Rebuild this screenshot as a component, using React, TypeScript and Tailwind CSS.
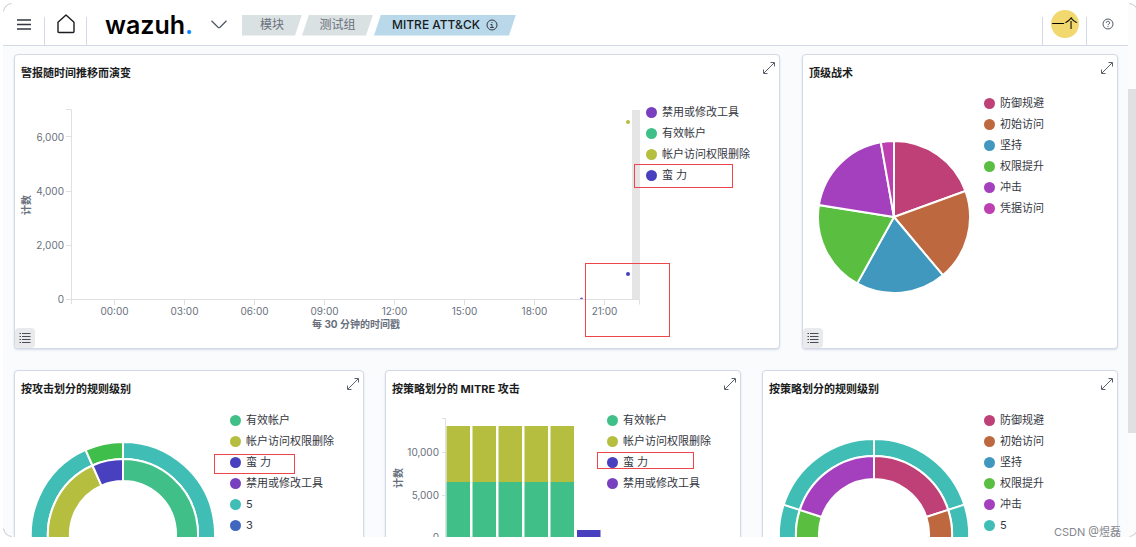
import type { ReactNode } from 'react';

interface LegendEntry {
  label: string;
  color: string;
}

interface Slice {
  from: number;
  to: number;
  color: string;
}

const green = '#40c088';
const olive = '#b6be40';
const indigo = '#4840be';
const purple = '#7840be';
const teal = '#40beb6';
const pink = '#be4076';
const orange = '#be6840';
const sky = '#4098be';
const lime = '#5abe40';
const violet = '#a440be';
const magenta = '#be40b0';

const evolutionLegend: LegendEntry[] = [
  { label: '禁用或修改工具', color: purple },
  { label: '有效帐户', color: green },
  { label: '帐户访问权限删除', color: olive },
  { label: '蛮 力', color: indigo },
];

const tacticsLegend: LegendEntry[] = [
  { label: '防御规避', color: pink },
  { label: '初始访问', color: orange },
  { label: '坚持', color: sky },
  { label: '权限提升', color: lime },
  { label: '冲击', color: violet },
  { label: '凭据访问', color: magenta },
];

const attackLevelLegend: LegendEntry[] = [
  { label: '有效帐户', color: green },
  { label: '帐户访问权限删除', color: olive },
  { label: '蛮 力', color: indigo },
  { label: '禁用或修改工具', color: purple },
  { label: '5', color: teal },
  { label: '3', color: '#4068be' },
];

const tacticAttackLegend: LegendEntry[] = attackLevelLegend.slice(0, 4);

const tacticLevelLegend: LegendEntry[] = [
  ...tacticsLegend.slice(0, 5),
  { label: '5', color: teal },
];

const pieSlices: Slice[] = [
  { from: 0, to: 70, color: pink },
  { from: 70, to: 140, color: orange },
  { from: 140, to: 209, color: sky },
  { from: 209, to: 279, color: lime },
  { from: 279, to: 350, color: violet },
  { from: 350, to: 360, color: magenta },
];

function arcPath(cx: number, cy: number, inner: number, outer: number, from: number, to: number) {
  const point = (r: number, deg: number) => {
    const rad = (deg * Math.PI) / 180;
    return `${(cx + r * Math.sin(rad)).toFixed(2)} ${(cy - r * Math.cos(rad)).toFixed(2)}`;
  };
  const large = to - from > 180 ? 1 : 0;
  return [
    `M${point(inner, from)}`,
    `L${point(outer, from)}`,
    `A${outer} ${outer} 0 ${large} 1 ${point(outer, to)}`,
    `L${point(inner, to)}`,
    `A${inner} ${inner} 0 ${large} 0 ${point(inner, from)}Z`,
  ].join('');
}

function Ring({ cx, cy, inner, outer, slices }: { cx: number; cy: number; inner: number; outer: number; slices: Slice[] }) {
  return (
    <g stroke="#fff" strokeWidth="2">
      {slices.map(s => (
        <path key={s.from} d={arcPath(cx, cy, inner, outer, s.from, s.to)} fill={s.color} />
      ))}
    </g>
  );
}

function ExpandIcon() {
  return (
    <svg viewBox="0 0 14 14" className="h-3.5 w-3.5" fill="none" stroke="#5a606c">
      <path d="M8.5 1.5h4v4M12 2 2 12M1.5 8.5v4h4" />
    </svg>
  );
}

function Legend({ items, className }: { items: LegendEntry[]; className: string }) {
  return (
    <ul className={`w-[133px] shrink-0 ${className}`}>
      {items.map(item => (
        <li key={item.label} className="flex h-[21px] items-center gap-[5px] whitespace-nowrap text-[11px] text-[#343741]">
          <span className="h-[11px] w-[11px] shrink-0 rounded-full" style={{ backgroundColor: item.color }} />
          {item.label}
        </li>
      ))}
    </ul>
  );
}

interface PanelProps {
  title: string;
  legend: LegendEntry[];
  legendClass?: string;
  withTable?: boolean;
  children: ReactNode;
}

function Panel({ title, legend, legendClass = 'pt-[5px]', withTable, children }: PanelProps) {
  return (
    <section className="relative min-w-0 rounded border border-[#d3dae6] bg-white shadow-[0_1px_2px_rgba(105,130,175,0.25)]">
      <header className="flex h-[34px] items-start justify-between pl-1.5 pr-[3px]">
        <h2 className="text-[11px] font-bold leading-9 text-[#1a1c21]">{title}</h2>
        <button type="button" aria-label="展开" className="mt-1.5">
          <ExpandIcon />
        </button>
      </header>
      <div className="flex">
        <div className="min-w-0 flex-1">{children}</div>
        <Legend items={legend} className={legendClass} />
      </div>
      {withTable && (
        <button
          type="button"
          aria-label="切换图例"
          className="absolute bottom-0 left-0 flex h-5 w-5 items-center justify-center rounded bg-[#e9eaec]"
        >
          <svg viewBox="0 0 12 10" className="h-2.5 w-3" stroke="#4a4d57">
            <path d="M.5 .5h1.5M3 .5h8.5M.5 3.5h1.5M3 3.5h8.5M.5 6.5h1.5M3 6.5h8.5M.5 9.5h1.5M3 9.5h8.5" />
          </svg>
        </button>
      )}
    </section>
  );
}

const hours = ['00:00', '03:00', '06:00', '09:00', '12:00', '15:00', '18:00', '21:00'];

function EvolutionChart() {
  return (
    <svg viewBox="0 0 631 259" className="block w-full overflow-visible" fontSize="10" fill="#69707d">
      <rect x="617" y="21" width="8" height="189" fill="#e5e5e5" />
      <path
        d="M51 20.5h5.5V215M51 47.5h5M51 102.5h5M51 156.5h5M51 210.5h573.5v5"
        fill="none"
        stroke="#dfe0e3"
      />
      {['6,000', '4,000', '2,000', '0'].map((label, i) => (
        <text key={label} x="49" y={52 + i * 54} textAnchor="end">{label}</text>
      ))}
      {hours.map((hour, i) => (
        <g key={hour}>
          <path d={`M${99.5 + i * 70} 211v5`} stroke="#dfe0e3" />
          <text x={99.5 + i * 70} y="226" textAnchor="middle">{hour}</text>
        </g>
      ))}
      <text x="341" y="239" textAnchor="middle" fontWeight="700">每 30 分钟的时间戳</text>
      <text transform="translate(15 116) rotate(-90)" textAnchor="middle" fontWeight="700">计数</text>
      <circle cx="613" cy="33" r="2" fill={olive} />
      <circle cx="613" cy="185" r="2" fill={indigo} />
      <path d="M565 210a1.5 1.5 0 0 1 3 0z" fill={purple} />
    </svg>
  );
}

function TacticsPie() {
  return (
    <svg viewBox="0 0 181 259" className="block w-full">
      <Ring cx={91} cy={128} inner={0} outer={76} slices={pieSlices} />
    </svg>
  );
}

function AttackLevelDonut() {
  return (
    <svg viewBox="0 0 215 259" className="block w-full">
      <Ring
        cx={108}
        cy={129}
        inner={75}
        outer={92}
        slices={[
          { from: 0, to: 168, color: teal },
          { from: 168, to: 336, color: teal },
          { from: 336, to: 360, color: '#40be4c' },
        ]}
      />
      <Ring
        cx={108}
        cy={129}
        inner={53}
        outer={75}
        slices={[
          { from: 0, to: 168, color: green },
          { from: 168, to: 336, color: olive },
          { from: 336, to: 360, color: indigo },
        ]}
      />
    </svg>
  );
}

function TacticLevelDonut() {
  const colors = [pink, orange, sky, lime, violet];
  const fifths = colors.map((color, i) => ({ from: i * 72, to: (i + 1) * 72, color }));
  return (
    <svg viewBox="0 0 221 259" className="block w-full">
      <Ring cx={111} cy={129} inner={78} outer={95} slices={fifths.map(s => ({ ...s, color: teal }))} />
      <Ring cx={111} cy={129} inner={55} outer={78} slices={fifths} />
    </svg>
  );
}

function TacticAttackBars() {
  return (
    <svg viewBox="0 0 221 259" className="block w-full" fontSize="10" fill="#69707d">
      <path d="M56 13.5h3.5V133M56 47.5h4M56 90.5h4M56 133.5h160" fill="none" stroke="#dfe0e3" />
      <text x="53" y="51" textAnchor="end">10,000</text>
      <text x="53" y="94" textAnchor="end">5,000</text>
      <text x="53" y="136" textAnchor="end">0</text>
      <text transform="translate(16 73) rotate(-90)" textAnchor="middle" fontWeight="700">计数</text>
      {[0, 1, 2, 3, 4].map(i => (
        <g key={i}>
          <rect x={60.5 + i * 26} y="21" width="23.5" height="56" fill={olive} />
          <rect x={60.5 + i * 26} y="77" width="23.5" height="56" fill={green} />
        </g>
      ))}
      <rect x="191" y="125" width="23.5" height="8" fill={indigo} />
    </svg>
  );
}

function TopBar() {
  return (
    <header className="flex h-[43px] shrink-0 items-stretch border-b border-[#d3dae6] bg-white">
      <button type="button" aria-label="菜单" className="flex w-[41px] items-center justify-center">
        <svg viewBox="0 0 14 11" className="h-[11px] w-3.5" stroke="#343741" strokeWidth="1.4">
          <path d="M0 1h14M0 5.5h14M0 10h14" />
        </svg>
      </button>
      <a href="#home" aria-label="主页" className="relative flex w-[43px] items-center justify-center">
        <span className="absolute bottom-0 left-0 h-7 w-px bg-[#d3dae6]" />
        <svg viewBox="0 0 18 20" className="h-5 w-[18px]" fill="none" stroke="#1a1c21" strokeWidth="1.4" strokeLinejoin="round">
          <path d="M1 8.2 9 1l8 7.2V17.5q0 1-1 1H2q-1 0-1-1z" />
        </svg>
        <span className="absolute bottom-0 right-0 h-7 w-px bg-[#d3dae6]" />
      </a>
      <a href="#wazuh" className="ml-[18px] flex w-[88px] items-center pt-0.5 text-[25px] font-semibold leading-none text-black">
        wazuh<span className="text-[#0d85fd]">.</span>
      </a>
      <button type="button" aria-label="展开菜单" className="ml-[18px] flex items-center">
        <svg viewBox="0 0 16 9" className="h-[9px] w-4" fill="none" stroke="#535966" strokeWidth="1.3">
          <path d="M.5 .8 7 7.3q1 .8 2 0L15.5.8" />
        </svg>
      </button>
      <nav aria-label="导航" className="ml-[15px] flex items-center pt-0.5 text-[12px] text-[#69707d]">
        <a href="#modules" className="flex h-[21px] w-[60px] items-center justify-center bg-[#d9e1e2] [clip-path:polygon(0_0,100%_0,calc(100%-7px)_100%,0_100%)]">
          模块
        </a>
        <a href="#group" className="flex h-[21px] w-[71px] items-center justify-center bg-[#d9e1e2] [clip-path:polygon(7px_0,100%_0,calc(100%-7px)_100%,0_100%)]">
          测试组
        </a>
        <a href="#mitre" className="ml-px flex h-[21px] w-[142px] items-center justify-center gap-1.5 bg-[#b9d9eb] font-medium text-[#1a1c21] [clip-path:polygon(7px_0,100%_0,calc(100%-7px)_100%,0_100%)]">
          MITRE ATT&amp;CK
          <svg viewBox="0 0 12 12" className="h-3 w-3" fill="none" stroke="#343741">
            <circle cx="6" cy="6" r="5" />
            <path d="M4.5 5.5H6v3M4.2 8.5h3.6M5.5 3.5h1" />
          </svg>
        </a>
      </nav>
      <div className="ml-auto flex">
        <div className="relative flex w-[45px] items-center justify-center">
          <span className="absolute bottom-0 left-0 h-7 w-px bg-[#d3dae6]" />
          <button type="button" className="flex h-7 w-7 items-center justify-center whitespace-nowrap rounded-full bg-[#f1d86f] text-[13px] text-black">
            一个
          </button>
          <span className="absolute bottom-0 right-0 h-7 w-px bg-[#d3dae6]" />
        </div>
        <button type="button" aria-label="帮助" className="flex w-[41px] items-center justify-center">
          <svg viewBox="0 0 12 12" className="h-3 w-3" fill="none" stroke="#535966">
            <circle cx="6" cy="6" r="5" />
            <path d="M4.3 4.8a1.7 1.5 0 1 1 2.6 1.2Q6 6.4 6 7.2M6 8.2v1" />
          </svg>
        </button>
      </div>
    </header>
  );
}

// rounded window corner: white outside the curve, a soft grey line on it
function Corner({ className }: { className: string }) {
  return (
    <svg viewBox="0 0 10 10" className={`absolute h-2.5 w-2.5 ${className}`} fill="none">
      <path d="M0 0h9Q1 1 0 9z" fill="#fff" />
      <path d="M.5 8.5Q1.5 1.5 8.5 .5" stroke="#c9cacc" />
    </svg>
  );
}

export default function App() {
  return (
    <div className="relative h-screen bg-white pb-2.5 pl-[3px] pt-[3px] font-['Inter','Noto_Sans_CJK_SC',sans-serif]">
      <div className="relative flex h-full overflow-hidden bg-[#fafbfd]">
        <div className="min-w-0 flex-1">
          <TopBar />
          <main className="pl-[11px] pr-2.5 pt-2">
            <div className="grid grid-cols-[766fr_316fr] gap-[22px]">
              <div className="relative">
                <Panel title="警报随时间推移而演变" legend={evolutionLegend} legendClass="pt-[13px]" withTable>
                  <EvolutionChart />
                </Panel>
                <span className="absolute right-[47px] top-[110px] h-6 w-[99px] border border-[#f0444b]" />
                <span className="absolute bottom-3 right-[110px] h-[74px] w-[85px] border border-[#f0444b]" />
              </div>
              <Panel title="顶级战术" legend={tacticsLegend} legendClass="pt-1" withTable>
                <TacticsPie />
              </Panel>
            </div>
            <div className="mt-[21px] grid grid-cols-[350fr_356fr_356fr] gap-[21px]">
              <div className="relative">
                <Panel title="按攻击划分的规则级别" legend={attackLevelLegend}>
                  <AttackLevelDonut />
                </Panel>
                <span className="absolute right-[69px] top-[84px] h-5 w-[81px] border border-[#f0444b]" />
              </div>
              <div className="relative">
                <Panel title="按策略划分的 MITRE 攻击" legend={tacticAttackLegend}>
                  <TacticAttackBars />
                </Panel>
                <span className="absolute right-[47px] top-[82px] h-[17px] w-[97px] border border-[#f0444b]" />
              </div>
              <Panel title="按策略划分的规则级别" legend={tacticLevelLegend}>
                <TacticLevelDonut />
              </Panel>
            </div>
          </main>
        </div>
        <div className="w-2 shrink-0 bg-[#fcfcfd] pt-[86px]">
          <div className="h-[344px] bg-[#e0e0e2]" />
        </div>
        <Corner className="left-0 top-0" />
        <Corner className="-right-0.5 top-0 rotate-90" />
        <Corner className="bottom-0 left-0 -rotate-90" />
        <Corner className="-right-0.5 bottom-0 rotate-180" />
      </div>
      <span className="absolute bottom-1.5 right-[15px] text-[11px] leading-[18px] text-[#85878c]">CSDN @煜磊</span>
    </div>
  );
}
